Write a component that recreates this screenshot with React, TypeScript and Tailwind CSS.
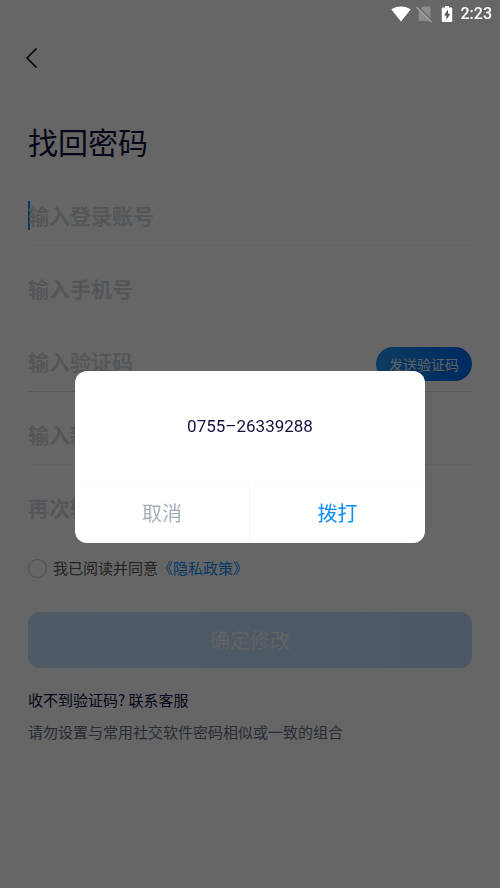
const fields = [
  { id: 'account', label: '输入登录账号', type: 'text' },
  { id: 'phone', label: '输入手机号', type: 'tel' },
  { id: 'code', label: '输入验证码', type: 'text' },
  { id: 'password', label: '输入新密码', type: 'password' },
  { id: 'confirm', label: '再次输入新密码', type: 'password' },
];

const StatusBar = () => (
  <div className="fixed inset-x-0 top-0 z-20 flex h-7 items-center justify-end px-2 text-white">
    <svg width="20" height="16" viewBox="0 0 20 16" fill="currentColor">
      <path d="M10 15.5 0.4 3.6C3 1.5 6.3 0.4 10 0.4s7 1.1 9.6 3.2z" />
    </svg>
    <svg className="ml-1" width="18" height="18" viewBox="0 0 18 18">
      <path d="M7.500 1.500H14a1.500 1.500 0 0 1 1.500 1.500v13H3.500V5.500z" fill="#8c8c8c" />
      <path d="M2.500 1 17.500 16" stroke="#666666" strokeWidth="1.500" />
      <path d="M1.500 2 16.500 17" stroke="#a0a0a0" strokeWidth="1.500" />
    </svg>
    <svg className="ml-2" width="12" height="18" viewBox="0 0 12 18">
      <path d="M4 1h4v1.6h2.2a1 1 0 0 1 1 1V16a1 1 0 0 1-1 1H1.8a1 1 0 0 1-1-1V3.600a1 1 0 0 1 1-1H4z" fill="currentColor" />
      <path d="M7 4.500 3 10.600h2.400V15L9.200 8.800H7z" fill="#555555" />
    </svg>
    <span className="ml-2 font-[Roboto] text-base font-medium">2:23</span>
  </div>
);

const CallDialog = () => (
  <div className="fixed inset-0 z-10 flex items-center justify-center bg-black/60 pt-[26px]">
    <div role="dialog" aria-modal="true" aria-label="联系客服" className="w-7/10 overflow-hidden rounded-xl bg-white">
      <p className="flex h-[111px] items-center justify-center font-[Roboto] text-[17px] text-[#12133f]">
        0755–26339288
      </p>
      <div className="grid h-[61px] grid-cols-2 border-t border-[#fcfcfc] text-xl">
        <button type="button" className="border-r border-[#f5f5f5] text-[#a3afba]">取消</button>
        <button type="button" className="text-[#0b8cff]">拨打</button>
      </div>
    </div>
  </div>
);

const App = () => {
  return (
    <div className="min-h-screen bg-white font-['Noto_Sans_CJK_SC',sans-serif] text-[#12133f]">
      <StatusBar />
      <main className="px-7 pt-11">
        <button type="button" aria-label="返回" className="-ml-1 flex h-7 w-7 items-center">
          <svg width="14" height="22" viewBox="0 0 14 22" fill="none" stroke="#000000" strokeWidth="1.6">
            <path d="M12.500 1.500 3 11l9.500 9.500" />
          </svg>
        </button>
        <h1 className="mt-[47px] text-3xl leading-[44px]">找回密码</h1>

        <form className="mt-2.5">
          {fields.map((field, i) => (
            <div key={field.id} className={`flex h-[73px] items-center border-b pt-3 ${field.id === 'code' ? 'border-[#e2e4e8]' : 'border-[#f4f5f7]'}`}>
              {i === 0 && <span className="-mr-0.5 h-[29px] w-0.5 shrink-0 bg-[#0b8cff]" />}
              <input
                id={field.id}
                type={field.type}
                aria-label={field.label}
                placeholder={field.label}
                className="h-10 w-full min-w-0 flex-1 bg-transparent text-[21px] font-bold outline-none placeholder:text-[#d1d9e0]"
              />
              {field.id === 'code' && (
                <button
                  type="button"
                  className="mb-2.5 h-[34px] shrink-0 self-end rounded-full bg-linear-to-r from-[#2196f3] to-[#0068f0] px-[13px] text-sm text-[#f0f0f0]"
                >
                  发送验证码
                </button>
              )}
            </div>
          ))}

          <div className="mt-[18px] flex items-center text-[15px] leading-6">
            <input id="agree" type="checkbox" className="mr-1.5 h-[19px] w-[19px] shrink-0 appearance-none rounded-full border border-[#cccccc]" />
            <label htmlFor="agree" className="text-[#555555]">我已阅读并同意</label>
            <a href="#privacy" className="text-[#0b8cff]">《隐私政策》</a>
          </div>

          <button
            type="button"
            className="mt-8 h-14 w-full rounded-xl bg-linear-to-r from-[#c3e3fb] to-[#c0dcff] text-xl text-[#f5f5f5]"
          >
            确定修改
          </button>
        </form>

        <p className="mt-5 text-[15px] leading-6">
          收不到验证码? <a href="#service">联系客服</a>
        </p>
        <p className="mt-2 text-[15px] leading-6 text-[#66707f]">请勿设置与常用社交软件密码相似或一致的组合</p>
      </main>
      <CallDialog />
    </div>
  );
};

export default App;
